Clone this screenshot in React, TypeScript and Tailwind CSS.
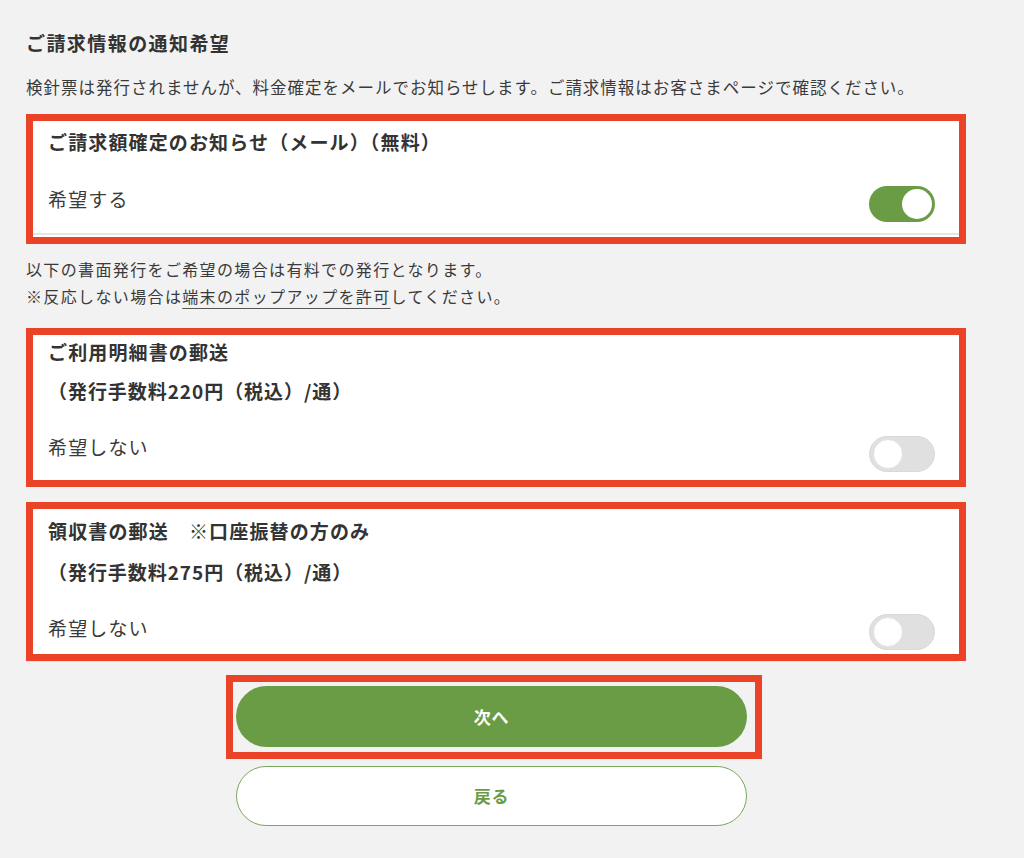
const FONT = "font-['Noto_Sans_CJK_JP','Noto_Sans',sans-serif]";

function Toggle({ on }: { on: boolean }) {
  if (on) {
    return (
      <div className="w-[66px] h-[36px] rounded-full bg-[#6a9c45] flex items-center justify-end pr-[3px] shrink-0">
        <div className="w-[30px] h-[30px] rounded-full bg-white" />
      </div>
    );
  }
  return (
    <div className="w-[66px] h-[36px] rounded-full bg-[#e0e0e0] border border-[#d9d9d9] flex items-center pl-[3px] shrink-0">
      <div className="w-[30px] h-[30px] rounded-full bg-white border border-[#e2e2e2]" />
    </div>
  );
}

export default function App() {
  return (
    <div className={`min-h-screen bg-[#f2f2f2] pl-[26px] pt-[30px] text-[#333] ${FONT}`}>
      <div className="w-[932px]">
        <h2 className="text-[19px] font-bold leading-[26px] tracking-[0.075em]">ご請求情報の通知希望</h2>
        <p className="mt-[19px] text-[16.5px] leading-[24px] tracking-[0.06em] text-[#3a3a3a]">
          検針票は発行されませんが、料金確定をメールでお知らせします。ご請求情報はお客さまページで確認ください。
        </p>

        {/* 1: mail notice */}
        <div className="mt-[15px] w-[940px] border-[7px] border-[#ea4328]">
          <div className="bg-white pb-[2px]">
            <div className="pl-[15px] pr-[24px] pt-[8px] pb-[11px] border-b-2 border-[#e6e6e6]">
              <div className="text-[19px] font-bold leading-[26px] tracking-[0.06em]">
                ご請求額確定のお知らせ（メール）（無料）
              </div>
              <div className="mt-[31px] flex items-start justify-between">
                <span className="text-[19px] leading-[26px] tracking-[0.06em] text-[#3a3a3a]">希望する</span>
                <Toggle on />
              </div>
            </div>
          </div>
        </div>

        <div className="mt-[12px] text-[16px] leading-[27px] tracking-[0.085em] text-[#3a3a3a]">
          <p>以下の書面発行をご希望の場合は有料での発行となります。</p>
          <p>
            ※反応しない場合は
            <span className="underline underline-offset-[5px] decoration-[#555]">端末のポップアップを許可</span>
            してください。
          </p>
        </div>

        {/* 2: statement by post */}
        <div className="mt-[18px] w-[940px] border-[7px] border-[#ea4328]">
          <div className="bg-white pl-[15px] pr-[24px] pt-[4px] pb-[8px]">
            <div className="text-[19px] font-bold leading-[26px] tracking-[0.06em]">ご利用明細書の郵送</div>
            <div className="mt-[13px] text-[19px] font-bold leading-[26px] tracking-[0.05em]">
              （発行手数料220円（税込）/通）
            </div>
            <div className="mt-[32px] flex items-start justify-between">
              <span className="text-[19px] leading-[26px] tracking-[0.06em] text-[#3a3a3a] -mt-[2px]">希望しない</span>
              <Toggle on={false} />
            </div>
          </div>
        </div>

        {/* 3: receipt by post */}
        <div className="mt-[15px] w-[940px] border-[7px] border-[#ea4328]">
          <div className="bg-white pl-[15px] pr-[24px] pt-[9px] pb-[4px]">
            <div className="text-[19px] font-bold leading-[26px] tracking-[0.06em]">
              領収書の郵送　※口座振替の方のみ
            </div>
            <div className="mt-[15px] text-[19px] font-bold leading-[26px] tracking-[0.05em]">
              （発行手数料275円（税込）/通）
            </div>
            <div className="mt-[29px] flex items-start justify-between">
              <span className="text-[19px] leading-[26px] tracking-[0.06em] text-[#3a3a3a] mt-[1px]">希望しない</span>
              <Toggle on={false} />
            </div>
          </div>
        </div>
        <div className="h-px w-[932px] bg-[#e4e4e4]" />

        {/* buttons */}
        <div className="mt-[13px] ml-[200px] w-[536px] border-[7px] border-[#ea4328] pl-[3px] pt-[4px] pb-[5px]">
          <button className="w-[511px] h-[61px] rounded-full bg-[#6a9c45] text-white text-[17px] font-bold tracking-[0.05em]">
            次へ
          </button>
        </div>
        <button className="mt-[7px] ml-[210px] w-[511px] h-[60px] rounded-full bg-white border border-[#7aa85a] text-[#6a9c45] text-[17px] font-bold tracking-[0.05em]">
          戻る
        </button>
      </div>
    </div>
  );
}
